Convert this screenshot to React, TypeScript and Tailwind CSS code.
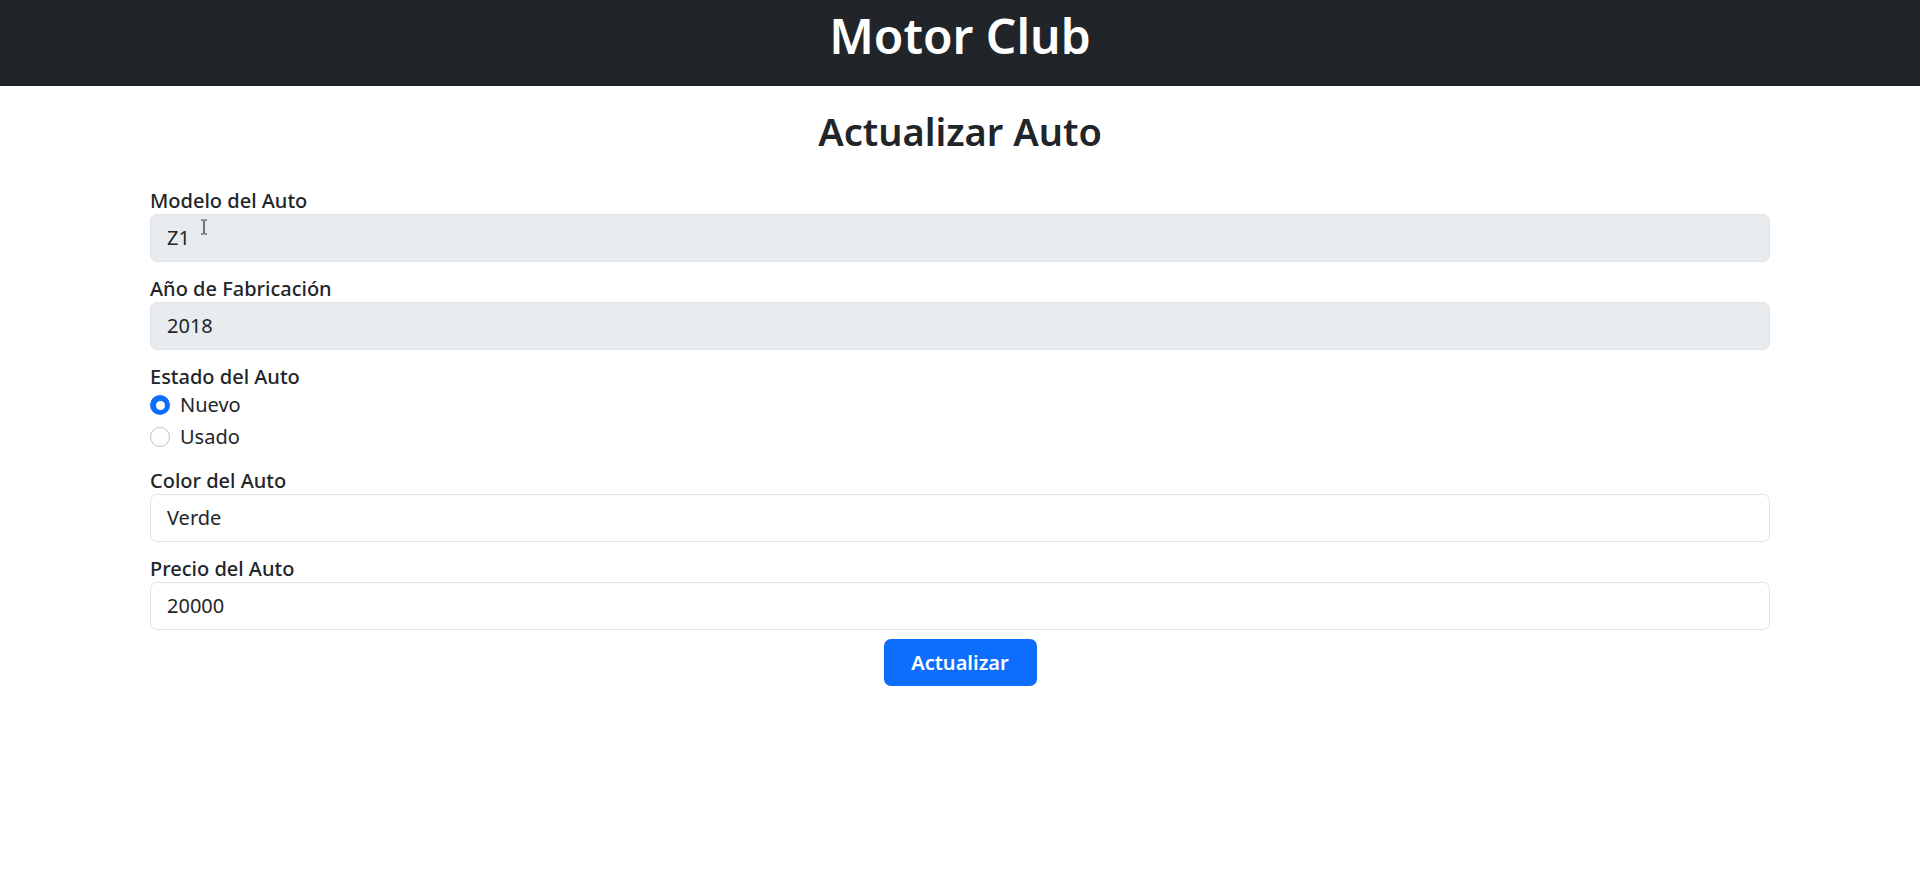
import React from "react";

const font = { fontFamily: '"Noto Sans", "Open Sans", Arial, sans-serif' };

function Label({ children }: { children: React.ReactNode }) {
  return (
    <label className="block h-[30px] pt-[3px] text-[20px] leading-[27px] font-medium text-[#212529]">{children}</label>
  );
}

function Input({ value, disabled }: { value: string; disabled?: boolean }) {
  return (
    <div
      className={`flex h-[48px] items-center rounded-[7px] border border-[#dee2e6] pl-[16px] text-[20px] text-[#212529] ${
        disabled ? "bg-[#e9ecef]" : "bg-white"
      }`}
    >
      {value}
    </div>
  );
}

export default function App() {
  return (
    <div className="min-h-[888px] w-full bg-white" style={font}>
      <header className="flex h-[86px] w-full items-start justify-center bg-[#212529] pt-[6px]">
        <h1 className="text-[48px] font-semibold leading-[60px] text-white">Motor Club</h1>
      </header>
      <main className="mx-auto w-[1620px]">
        <h2 className="mt-[21px] h-[48px] text-center text-[38px] font-semibold leading-[48px] text-[#212529]">
          Actualizar Auto
        </h2>
        <form className="mt-[29px] flex flex-col">
          <div className="relative">
            <Label>Modelo del Auto</Label>
            <Input value="Z1" disabled />
            <svg className="absolute left-[50px] top-[35px]" width="8" height="16" viewBox="0 0 8 16">
              <path d="M1 1h2.5M4.5 1H7M4 1.5v13M1 15h2.5M4.5 15H7" stroke="#222" strokeWidth="1.2" fill="none" />
            </svg>
          </div>
          <div className="mt-[10px]">
            <Label>Año de Fabricación</Label>
            <Input value="2018" disabled />
          </div>
          <div className="mt-[10px]">
            <Label>Estado del Auto</Label>
            <div className="flex h-[30px] items-center">
              <span className="flex h-[20px] w-[20px] items-center justify-center rounded-full bg-[#0d6efd]">
                <span className="h-[9px] w-[9px] rounded-full bg-white" />
              </span>
              <span className="ml-[10px] text-[20px] leading-[30px] text-[#212529]">Nuevo</span>
            </div>
            <div className="mt-[2px] flex h-[30px] items-center">
              <span className="h-[20px] w-[20px] rounded-full border border-[#bfbfbf] bg-white" />
              <span className="ml-[10px] text-[20px] leading-[30px] text-[#212529]">Usado</span>
            </div>
          </div>
          <div className="mt-[12px]">
            <Label>Color del Auto</Label>
            <Input value="Verde" />
          </div>
          <div className="mt-[10px]">
            <Label>Precio del Auto</Label>
            <Input value="20000" />
          </div>
          <div className="mt-[9px] flex justify-center">
            <button
              type="button"
              className="h-[47px] w-[153px] rounded-[7px] bg-[#0d6efd] text-[20px] font-semibold text-white"
            >
              Actualizar
            </button>
          </div>
        </form>
      </main>
    </div>
  );
}
